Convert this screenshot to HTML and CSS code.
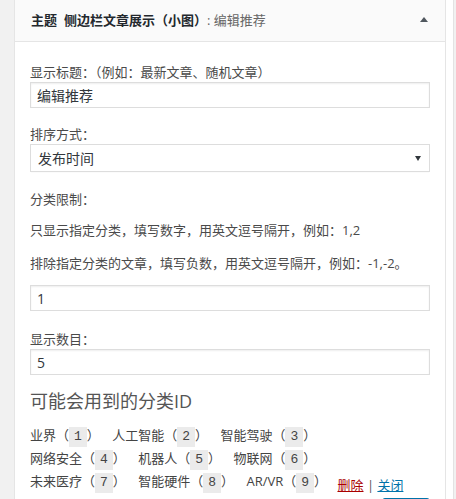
FILE: index.html
```html
<!DOCTYPE html>
<html lang="zh-CN">
<head>
    <meta charset="UTF-8">
    <meta name="viewport" content="width=device-width, initial-scale=1.0">
    <title>侧边栏文章展示（小图）</title>
    <link rel="stylesheet" href="styles.css">
</head>
<body>
    <div class="widget">
        <div class="widget-top">
            <h3 class="widget-title"><span class="theme">主题</span>侧边栏文章展示（小图）<span class="in-title">: 编辑推荐</span></h3>
            <span class="toggle"></span>
        </div>
        <div class="widget-inside">
            <label class="field-label first">显示标题：（例如：最新文章、随机文章）</label>
            <input class="text-input" type="text" value="编辑推荐">

            <label class="field-label gap-16">排序方式：</label>
            <div class="select-wrap">
                <select class="select-input">
                    <option>发布时间</option>
                    <option>评论数量</option>
                    <option>随机排序</option>
                </select>
            </div>

            <p class="note gap-17">分类限制：</p>
            <p class="note gap-11">只显示指定分类，填写数字，用英文逗号隔开，例如：1,2</p>
            <p class="note gap-13">排除指定分类的文章，填写负数，用英文逗号隔开，例如：-1,-2。</p>
            <input class="text-input gap-12" type="text" value="1">

            <label class="field-label gap-18">显示数目：</label>
            <input class="text-input" type="text" value="5">

            <h4 class="cat-heading">可能会用到的分类ID</h4>
            <div class="cat-list">
                <div class="cat-row">
                    <span class="cat">业界（<code>1</code>）</span>
                    <span class="cat">人工智能（<code>2</code>）</span>
                    <span class="cat">智能驾驶（<code>3</code>）</span>
                </div>
                <div class="cat-row">
                    <span class="cat">网络安全（<code>4</code>）</span>
                    <span class="cat">机器人（<code>5</code>）</span>
                    <span class="cat">物联网（<code>6</code>）</span>
                </div>
                <div class="cat-row">
                    <span class="cat">未来医疗（<code>7</code>）</span>
                    <span class="cat">智能硬件（<code>8</code>）</span>
                    <span class="cat">AR/VR（<code>9</code>）</span>
                    <span class="control-actions"><a href="#" class="delete">删除</a> | <a href="#" class="close">关闭</a></span>
                </div>
            </div>

            <div class="save-row">
                <button class="save-button">保存</button>
            </div>
        </div>
    </div>
</body>
</html>
```

FILE: styles.css
```css
html,
body {
    height: 100%;
    overflow: hidden;
}

body {
    margin: 0;
    padding-left: 14px;
    background-color: #f1f1f1;
    font-family: "Open Sans", "Noto Sans CJK SC", sans-serif;
    font-size: 13px;
    color: #444;
}

.widget {
    width: 430px;
    background-color: #fff;
    border: 1px solid #e5e5e5;
    border-top: none;
    box-shadow: 7px 0 0 #fff, 8px 0 0 #e3e3e3;
}

.widget-top {
    display: flex;
    align-items: center;
    justify-content: space-between;
    height: 41px;
    padding: 0 17px 0 16px;
    background-color: #fafafa;
    border-bottom: 1px solid #e5e5e5;
}

.widget-title {
    margin: 0;
    font-size: 13px;
    font-weight: 600;
    line-height: 41px;
    color: #23282d;
    white-space: nowrap;
}

.theme {
    margin-right: 7px;
}

.in-title {
    font-weight: 400;
    color: #666;
}

.toggle {
    width: 0;
    height: 0;
    border-left: 4px solid transparent;
    border-right: 4px solid transparent;
    border-bottom: 5px solid #50575e;
    margin-top: -2px;
}

.widget-inside {
    padding: 0 15px 20px 15px;
}

.field-label,
.note {
    display: block;
    margin: 0;
    line-height: 20px;
    color: #4a4a4a;
}

.field-label.first {
    padding-top: 20px;
}

.text-input,
.select-input {
    display: block;
    box-sizing: border-box;
    width: 400px;
    height: 26px;
    margin: 0;
    padding: 0 6px;
    font-family: inherit;
    font-size: 14px;
    color: #32373c;
    background-color: #fff;
    border: 1px solid #ddd;
    border-radius: 0;
    box-shadow: inset 0 1px 2px rgba(0, 0, 0, 0.07);
    outline: none;
}

.select-wrap {
    position: relative;
    width: 400px;
}

.select-wrap::after {
    content: "";
    position: absolute;
    right: 9px;
    top: 12px;
    border-left: 3px solid transparent;
    border-right: 3px solid transparent;
    border-top: 5px solid #32373c;
    pointer-events: none;
}

.select-input {
    height: 28px;
    padding-left: 7px;
    -webkit-appearance: none;
    appearance: none;
    box-shadow: 0 1px 1px -1px rgba(0, 0, 0, 0.1);
}

.cat-heading {
    margin: 14px 0 0 0;
    font-size: 18px;
    font-weight: 400;
    line-height: 24px;
    color: #555;
}

.cat-list {
    margin-top: 11px;
}

.cat-row {
    line-height: 23px;
    white-space: nowrap;
}

.cat {
    margin-right: 9px;
}

code {
    display: inline-block;
    padding: 0 5px;
    line-height: 20px;
    font-family: "Liberation Mono", monospace;
    font-size: 13px;
    color: #444;
    background-color: #ebebeb;
}

.control-actions {
    display: inline-block;
    margin-left: -2px;
    vertical-align: -4px;
    color: #555;
}

.control-actions a {
    text-decoration: underline;
}

.delete {
    color: #a00;
}

.close {
    color: #0073aa;
}

.save-row {
    display: flex;
    justify-content: flex-end;
    margin-top: 1px;
}

.save-button {
    box-sizing: border-box;
    width: 48px;
    height: 30px;
    padding: 12px 0 0 0;
    font-family: inherit;
    font-size: 13px;
    line-height: 16px;
    color: #fff;
    background-color: #0085ba;
    border: 1px solid #0073aa;
    border-radius: 3px;
}

/* spacing between form rows */
.gap-11 { margin-top: 11px; }
.gap-12 { margin-top: 12px; }
.gap-13 { margin-top: 13px; }
.gap-16 { margin-top: 16px; }
.gap-17 { margin-top: 17px; }
.gap-18 { margin-top: 18px; }
```
